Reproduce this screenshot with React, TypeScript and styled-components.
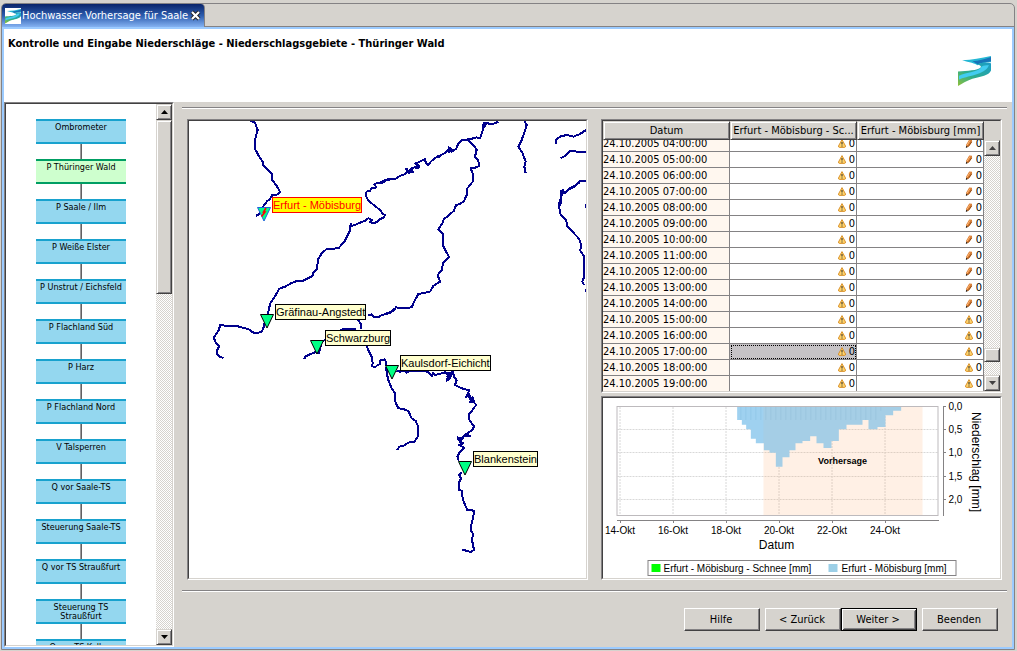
import React, { useLayoutEffect, useRef } from 'react';
import styled, { createGlobalStyle, css } from 'styled-components';

const face = '#d6d3ce';
const shade = '#848284';
const dark = '#424142';
const uiFont = '"DejaVu Sans Condensed", "DejaVu Sans", sans-serif';
const mapFont = '"Liberation Sans", Arial, sans-serif';

const GlobalStyle = createGlobalStyle`
  *, *::before, *::after { box-sizing: border-box; }
  body {
    margin: 0;
    background: ${face};
    color: #000;
    font: 11px/14px ${uiFont};
  }
  button { font: inherit; color: inherit; margin: 0; padding: 0; }
`;

const raised = css`
  background: ${face};
  border: 1px solid;
  border-color: ${face} ${dark} ${dark} ${face};
  box-shadow: inset 1px 1px #fff, inset -1px -1px ${shade};
`;

/* Window frame */
const Page = styled.div`
  height: 100vh;
  min-height: 500px;
  min-width: 760px;
  padding: 3px 2px 1px 1px;
  display: flex;
`;
const Shell = styled.section`
  flex: 1;
  min-width: 0;
  display: flex;
  flex-direction: column;
  border: 1px solid ${shade};
  border-radius: 5px 5px 0 0;
  overflow: hidden;
`;
const TabBar = styled.div`
  display: flex;
  height: 23px;
`;
const Tab = styled.div`
  display: flex;
  align-items: center;
  padding: 0 3px;
  border-right: 1px solid ${shade};
  border-top-right-radius: 4px;
  background: linear-gradient(#0a246a, #2c5cae 50%, #84b2f2);
  color: #fff;
  white-space: nowrap;
`;
const TabIcon = styled.span`
  display: flex;
  background: #fff;
`;
const TabTitle = styled.span`
  margin: 0 2px 0 1px;
`;
const TabClose = styled.button`
  display: flex;
  border: 0;
  background: none;
`;
const TabRest = styled.div`
  flex: 1;
  border-bottom: 1px solid ${shade};
`;
const Frame = styled.div`
  flex: 1;
  min-height: 0;
  display: flex;
  flex-direction: column;
  border: 2px solid #9ccbff;
`;
const Header = styled.header`
  display: flex;
  justify-content: space-between;
  height: 73px;
  padding: 8px 21px 0 4px;
  background: #fff;
`;
const Title = styled.h1`
  margin: 0;
  font-size: 11px;
  line-height: 14px;
  font-weight: bold;
`;
const HeaderLogo = styled.div`
  align-self: flex-end;
  display: flex;
  padding-bottom: 15px;
`;
const Body = styled.div`
  flex: 1;
  min-height: 0;
  display: flex;
`;

/* Sunken panel: two nested bevel lines */
const BevelOuter = styled.div`
  display: flex;
  min-width: 0;
  min-height: 0;
  border: 1px solid;
  border-color: ${shade} #fff #fff ${shade};
`;
const BevelInner = styled.div`
  flex: 1;
  display: flex;
  min-width: 0;
  min-height: 0;
  border: 1px solid;
  border-color: ${dark} ${face} ${face} ${dark};
  background: #fff;
  overflow: hidden;
`;

/* Scroll bar */
const Bar = styled.div`
  width: 16px;
  flex: none;
  display: flex;
  flex-direction: column;
`;
const ArrowButton = styled.button`
  ${raised}
  height: 16px;
  display: flex;
  align-items: center;
  justify-content: center;
`;
const Track = styled.div`
  flex: 1;
  display: flex;
  flex-direction: column;
  background: repeating-conic-gradient(#fff 0 25%, ${face} 0 50%) 0 0 / 2px 2px;
`;
const TrackPart = styled.div<{ $grow: number }>`
  flex: ${(p) => p.$grow} 0 0;
`;
const Thumb = styled(TrackPart)`
  ${raised}
`;

/* Step list */
const SidebarPanel = styled(BevelOuter)`
  width: 170px;
  flex: none;
`;
const StepList = styled.ol`
  flex: 1;
  margin: 0;
  padding: 15px 0 0;
  list-style: none;
  overflow: hidden;
`;
const StepItem = styled.li`
  display: flex;
  flex-direction: column;
  align-items: center;
  &:not(:last-child)::after {
    content: '';
    width: 2px;
    height: 15px;
    background: linear-gradient(90deg, #9c9a9c 50%, #636163 50%);
  }
`;
const StepButton = styled.button<{ $active: boolean }>`
  width: 90px;
  height: 25px;
  display: flex;
  justify-content: center;
  align-items: flex-start;
  padding-top: 2px;
  border: solid ${(p) => (p.$active ? '#009e63' : '#18a2ce')};
  border-width: 2px 0;
  background: ${(p) => (p.$active ? '#ceffce' : '#94d7ef')};
  font-size: 9px;
  line-height: 9px;
  text-align: center;
`;
const StepText = styled.span`
  white-space: pre;
`;

/* Work area */
const Main = styled.main`
  flex: 1;
  min-width: 0;
  display: flex;
  flex-direction: column;
  padding: 5px 5px 16px 8px;
`;
const Separator = styled.hr`
  width: 100%;
  height: 2px;
  margin: 0;
  border: solid;
  border-width: 1px 0;
  border-color: ${shade} transparent #fff;
`;
const Workspace = styled.div`
  flex: 1;
  min-height: 0;
  display: grid;
  grid-template-columns: 1fr 1fr;
  gap: 13px;
  padding: 10px 5px;
`;
const DataColumn = styled.div`
  min-width: 0;
  min-height: 0;
  display: grid;
  grid-template-rows: minmax(0, 1fr) 184px;
  gap: 3px;
`;
const ButtonRow = styled.footer`
  display: flex;
  justify-content: flex-end;
  gap: 5px;
  padding: 16px 9px 0 0;
`;
const ButtonPair = styled.div`
  display: flex;
`;
const PushButton = styled.button<{ $primary?: boolean }>`
  width: 76px;
  height: 23px;
  padding-right: 2px;
  background: ${face};
  border: 1px solid;
  border-color: #fff ${dark} ${dark} #fff;
  box-shadow: inset -1px -1px ${shade};
  ${(p) =>
    p.$primary &&
    css`
      border-color: #000;
      box-shadow: inset 1px 1px #fff, inset -1px -1px ${dark}, inset 2px 2px ${face}, inset -2px -2px ${shade};
    `}
`;

/* Map */
const MapCanvas = styled.div`
  position: relative;
  flex: 1;
  overflow: hidden;
`;
const Rivers = styled.svg`
  display: block;
`;
const Station = styled.div<{ $x: number; $y: number; $selected: boolean }>`
  position: absolute;
  left: ${(p) => p.$x}px;
  top: ${(p) => p.$y}px;
  display: flex;
  align-items: flex-start;
  gap: 1px;
  color: ${(p) => (p.$selected ? '#f00' : '#000')};
`;
const StationMark = styled.svg`
  margin-top: 10px;
`;
const StationLabel = styled.span<{ $selected: boolean }>`
  border: 1px solid currentColor;
  background: ${(p) => (p.$selected ? '#ff0' : '#ffffce')};
  font: 11px/14px ${mapFont};
  white-space: nowrap;
`;

/* Table */
const TableViewport = styled.div`
  flex: 1;
  min-width: 0;
  overflow: hidden;
`;
const DataTable = styled.table`
  width: 100%;
  table-layout: fixed;
  border-collapse: separate;
  border-spacing: 0;
`;
const HeadCell = styled.th`
  ${raised}
  position: sticky;
  top: 0;
  z-index: 1;
  height: 19px;
  padding: 0 1px;
  font-weight: normal;
  line-height: 15px;
  white-space: nowrap;
  overflow: hidden;
`;
const Cell = styled.td<{ $selected?: boolean }>`
  height: 16px;
  padding: 0 1px 0 0;
  border: solid ${shade};
  border-width: 0 1px 1px 0;
  line-height: 15px;
  white-space: nowrap;
  overflow: hidden;
  ${(p) =>
    p.$selected &&
    css`
      background: #c6c3c6;
      outline: 1px dotted #000;
      outline-offset: -2px;
    `}
`;
const DateCell = styled(Cell)`
  background: #fff7ef;
`;
const ValueBox = styled.span`
  display: flex;
  justify-content: flex-end;
  align-items: center;
  gap: 3px;
`;
const TableBarSlot = styled.div`
  display: flex;
  padding-top: 19px;
  background: ${face};
`;

/* Chart */
const ChartSvg = styled.svg`
  flex: 1;
  width: 100%;
  height: 100%;
  font-family: ${mapFont};
`;

const steps = [
  'Ombrometer', 'P Thüringer Wald', 'P Saale / Ilm', 'P Weiße Elster', 'P Unstrut / Eichsfeld',
  'P Flachland Süd', 'P Harz', 'P Flachland Nord', 'V Talsperren', 'Q vor Saale-TS',
  'Steuerung Saale-TS', 'Q vor TS Straußfurt', 'Steuerung TS\nStraußfurt', 'Q vor TS Kelbra',
];

const stations = [
  { name: 'Erfurt - Möbisburg', x: 68, y: 76, selected: true },
  { name: 'Gräfinau-Angstedt', x: 71, y: 183, selected: false },
  { name: 'Schwarzburg', x: 121, y: 209, selected: false },
  { name: 'Kaulsdorf-Eichicht', x: 196, y: 234, selected: false },
  { name: 'Blankenstein', x: 269, y: 330, selected: false },
];

/* River courses in thirds of a pixel, grouped by map sheet */
const sheets = [
  {
    x: -12, y: -63,
    lines: [
      '197,62 210,68 218,90 212,110 209,145 220,165 233,185 233,193 247,208 260,222 262,240 275,258 285,275 280,283 262,285 255,297 245,305 233,322 222,342 213,348',
      '630,237 607,238 598,245 588,250 578,248 568,253 574,262 560,265 555,272 545,275 542,285 548,298 560,310 575,322 585,330 592,340 600,345 597,352 585,358 575,366 565,370 556,366 562,360 550,355 540,362 525,368 510,375 500,378 497,372 495,392 490,402 478,425 460,445 425,447 410,460 398,480 397,505 385,518 382,528 355,542 340,542 330,545 318,550 300,560 283,566 275,580 265,597 257,608 252,625 248,645',
    ],
  },
  {
    x: -12, y: 537,
    lines: [
      '238,70 235,85 230,95 212,100 200,95 190,87 175,84 155,78 140,79 105,75 102,90 95,100 86,112 92,128 103,138 97,150 97,162 105,170 115,174',
      '358,178 360,170 375,163 390,157 402,160 410,125 420,120',
      '465,90 480,87 513,88',
      '548,45 560,43 565,50 582,50 590,45 600,43 615,38 630,25',
      '515,55 528,72 528,88',
      '545,137 552,155 560,170 563,190 560,198 570,202 578,195 585,192 585,182 598,178 603,185 602,197',
    ],
  },
  {
    x: 573, y: -63,
    lines: [
      '0,248 15,240 45,237 60,228 75,222 82,215 78,207 88,215 98,215 95,205 108,200 118,200 108,190 125,182 135,177 137,187 145,195 155,182 172,170 190,162 205,150 210,143 215,155 228,147 235,130 245,121 265,118 280,115 290,112 300,115 305,100 310,85 308,75 318,68 330,72 345,70 355,65',
      '80,206 86,219 92,208 99,219',
      '104,188 112,194 106,203 118,205',
      '170,166 178,172 184,163',
      '204,141 216,149 206,155 220,153',
      '262,118 270,127 282,137 290,150 285,170 295,180 297,198 285,203 272,205 278,220 278,245 262,265 260,285 252,303 240,312 228,315 222,332 205,347 192,357 187,370 175,388 188,402 188,435 198,455 207,470 190,488 185,510 173,525 180,545 160,558 150,575 115,582 105,600 95,622 60,625 48,622 40,633 20,640 0,648',
      '433,62 440,75 435,92 425,120 415,140 428,160 432,172 437,185 433,200 437,220',
      '527,132 528,120 540,110 560,105 580,110 600,102 618,90',
      '542,175 555,168 570,153 595,155 618,155',
      '618,242 600,243 580,262 565,270 555,278 548,270 542,275 542,295 536,315 542,345 558,360 562,378 580,398 598,417 603,435 601,452 611,468 612,500 613,530 607,545 612,555',
      '600,246 582,259 568,266 560,275 550,276 545,285 541,318',
      '310,66 318,73 312,84',
      '617,313 617,323',
      '617,567 617,575',
    ],
  },
  {
    x: 573, y: 657,
    lines: [
      '18,80 20,95 24,118 35,145 46,160 46,185 55,205 70,207 85,213 95,235 107,243 115,260 115,288 103,305 85,308 70,318 58,320 52,330',
      '50,92 60,95 75,93 80,98 90,93 130,92 145,96 150,103 156,108 160,98 165,105 185,100 195,97 205,105 200,122 210,115 218,92 222,110 230,120 225,135 238,142 255,148 268,150 258,172 268,162 272,182 278,172 283,188 289,195 280,205 275,215 266,222 267,238 275,250 283,258 277,270 265,278 255,287 270,288 257,282 245,295 233,292 236,300 248,296 240,306 250,310 238,315 252,323 240,335 232,350 236,362',
      '198,98 212,98 208,112 200,108',
      '264,170 276,176 270,186 280,184',
      '245,395 238,405 243,415 236,430 237,450 245,452 248,475 255,495 262,510 282,512 280,530 275,550 272,570 278,580 277,605 280,620 282,630 272,636 262,633 245,628',
    ],
  },
];

const hours = Array.from({ length: 16 }, (_, i) => i + 4);

/* Precipitation steps: [left edge, depth] in thirds of a pixel */
const rain: [number, number][] = [
  [401, 42], [415, 56], [428, 70], [442, 98], [457, 112], [481, 133], [498, 140], [517, 182],
  [537, 154], [558, 133], [576, 112], [597, 105], [620, 91], [639, 112], [660, 126], [684, 105],
  [706, 70], [729, 56], [777, 42], [795, 70], [822, 63], [846, 28], [869, 14], [893, 0],
];
const rainPath = `M401,24 ${rain.map(([x, d]) => `H${x} V${24 + d}`).join(' ')} V24 Z`;

const dayTicks = [14, 16, 18, 20, 22, 24].map((day, i) => ({ day, x: 16.5 + i * 53 }));
const valueTicks = [
  { label: '0,0', y: 8.5 }, { label: '0,5', y: 31.5 }, { label: '1,0', y: 54.5 },
  { label: '1,5', y: 78.5 }, { label: '2,0', y: 101.5 },
];

function RiverIcon({ size }: { size: number }) {
  return (
    <svg width={size} height={size} viewBox="0 0 32 32" aria-hidden="true">
      <defs>
        <linearGradient id={`bank${size}`} x1="0" x2="1" y1="1" y2="0">
          <stop offset="0" stopColor="#8fbf3a" />
          <stop offset="0.4" stopColor="#2fae8a" />
          <stop offset="1" stopColor="#1a9cc8" />
        </linearGradient>
      </defs>
      <path d="M4 6 C14 6 22 4 32 2 V8 C26 8 22 9 19 11 C17 9 11 8 4 6Z" fill="#25b7d4" />
      <path d="M14 7 C20 7 26 5 32 3 V7 C26 8 21 9 19 10Z" fill="#1873b8" />
      <path d="M19 10 C23 8 28 8 32 9 V16 C30 21 22 22 14 24 C8 26 4 29 0 31 V17 C9 16 19 16 22 13 C23 12 21 11 19 10Z" fill={`url(#bank${size})`} />
      <path d="M23 12 C20 18 8 17 1 21 V25 C8 21 26 21 30 11 C27 11 25 11 23 12Z" fill="#42ccf0" />
    </svg>
  );
}

function WarningIcon() {
  return (
    <svg width="8" height="9" viewBox="0 0 8 9" role="img" aria-label="Warnung">
      <path d="M4 .6 L7.5 7 Q7.6 8.3 6.6 8.4 H1.4 Q.4 8.3 .5 7 Z" fill="#ffd36b" stroke="#d68a21" strokeWidth=".9" />
      <path d="M3.5 3 H4.5 V5.6 H3.5Z M3.5 6.4 H4.5 V7.4 H3.5Z" fill="#212021" />
    </svg>
  );
}

function PencilIcon() {
  return (
    <svg width="8" height="9" viewBox="0 0 8 9" role="img" aria-label="Bearbeitet">
      <path d="M1 8.5 L1.3 5.4 L4.2 .6 L7 .8 L6.8 3.4 L3.6 7.8 Z" fill="#d67b31" />
      <path d="M2.2 6 L5 1.4" stroke="#ffb573" strokeWidth="1" />
      <path d="M3.5 7.4 L6.7 2.8" stroke="#844110" strokeWidth=".8" />
      <path d="M.8 9 L1.2 6.8 L2.8 8Z" fill="#212021" />
    </svg>
  );
}

function ScrollBar({ before, thumb, after, arrow }: { before: number; thumb: number; after: number; arrow: string }) {
  return (
    <Bar>
      <ArrowButton aria-label="Nach oben">
        <svg width="7" height="4" viewBox="0 0 7 4"><path d="M0 4 L3.5 0 L7 4Z" fill={arrow} /></svg>
      </ArrowButton>
      <Track>
        <TrackPart $grow={before} />
        <Thumb $grow={thumb} />
        <TrackPart $grow={after} />
      </Track>
      <ArrowButton aria-label="Nach unten">
        <svg width="7" height="4" viewBox="0 0 7 4"><path d="M0 0 L3.5 4 L7 0Z" fill={arrow} /></svg>
      </ArrowButton>
    </Bar>
  );
}

function StepSidebar() {
  return (
    <SidebarPanel as="nav">
      <BevelInner>
        <StepList>
          {steps.map((step, i) => (
            <StepItem key={step}>
              <StepButton $active={i === 1}><StepText>{step}</StepText></StepButton>
            </StepItem>
          ))}
        </StepList>
        <ScrollBar before={0} thumb={173} after={336} arrow="#000" />
      </BevelInner>
    </SidebarPanel>
  );
}

function RiverMap() {
  return (
    <BevelOuter>
      <BevelInner>
        <MapCanvas>
          <Rivers width="397" height="457" viewBox="0 0 1191 1371" shapeRendering="crispEdges">
            {sheets.map((sheet, i) => (
              <g key={i} transform={`translate(${sheet.x} ${sheet.y})`} fill="none" stroke="#00008c" strokeWidth="6" strokeLinejoin="round">
                {sheet.lines.map((points) => <polyline key={points} points={points} />)}
              </g>
            ))}
          </Rivers>
          {stations.map((s) => (
            <Station key={s.name} $x={s.x} $y={s.y} $selected={s.selected}>
              <StationMark width="14" height="15" viewBox="0 0 14 15">
                <path d="M.5 .5 H13.5 L7 14Z" fill="#00ff84" stroke={s.selected ? '#2161de' : '#000'} />
                {s.selected && <path d="M9 1 L6.5 5 H8 L4.5 9.5" fill="none" stroke="#f00" strokeWidth="1.6" />}
              </StationMark>
              <StationLabel $selected={s.selected}>{s.name}</StationLabel>
            </Station>
          ))}
        </MapCanvas>
      </BevelInner>
    </BevelOuter>
  );
}

function ValueTable() {
  const viewport = useRef<HTMLDivElement>(null);
  useLayoutEffect(() => {
    if (viewport.current) viewport.current.scrollTop = 4;
  }, []);
  return (
    <BevelOuter>
      <BevelInner>
        <TableViewport ref={viewport}>
          <DataTable>
            <thead>
              <tr>
                <HeadCell>Datum</HeadCell>
                <HeadCell title="Erfurt - Möbisburg - Schnee [mm]">Erfurt - Möbisburg - Sc...</HeadCell>
                <HeadCell>Erfurt - Möbisburg [mm]</HeadCell>
              </tr>
            </thead>
            <tbody>
              {hours.map((h) => (
                <tr key={h}>
                  <DateCell>24.10.2005 {String(h).padStart(2, '0')}:00:00</DateCell>
                  <Cell $selected={h === 17}><ValueBox><WarningIcon />0</ValueBox></Cell>
                  <Cell><ValueBox>{h < 15 ? <PencilIcon /> : <WarningIcon />}0</ValueBox></Cell>
                </tr>
              ))}
            </tbody>
          </DataTable>
        </TableViewport>
        <TableBarSlot><ScrollBar before={194} thumb={12} after={13} arrow="#424142" /></TableBarSlot>
      </BevelInner>
    </BevelOuter>
  );
}

function RainChart() {
  return (
    <BevelOuter>
      <BevelInner>
        <ChartSvg viewBox="0 0 396 180" role="img" aria-label="Niederschlag">
          <g stroke="#d8d8d8" strokeDasharray="2 1">
            {dayTicks.map((t) => <line key={t.day} x1={t.x} x2={t.x} y1="9" y2="117" />)}
            {valueTicks.slice(1).map((t) => <line key={t.label} x1="14" x2="334" y1={t.y} y2={t.y} />)}
          </g>
          <rect x="160" y="9" width="159" height="109" fill="#ffa862" fillOpacity=".1" />
          <g transform="scale(0.333333)">
            <path d={rainPath} fill="#9fd1f0" />
            {Array.from({ length: 29 }, (_, i) => (
              <line key={i} x1={412 + i * 15} x2={412 + i * 15} y1="24" y2={24 + (i < 28 ? 42 : 14)} stroke="#93c8e8" strokeWidth="3" />
            ))}
          </g>
          <rect x="160" y="9" width="159" height="109" fill="#ffa862" fillOpacity=".07" />
          <rect x="13.5" y="8.5" width="321" height="109" fill="none" stroke="#bdbabd" />
          <g stroke="#848284" shapeRendering="crispEdges">
            <path d="M13 122.5 H335 M339.5 8 V118" fill="none" />
            {dayTicks.map((t) => <line key={t.day} x1={t.x} x2={t.x} y1="122" y2="125" />)}
            {valueTicks.map((t) => <line key={t.label} x1="339" x2="342" y1={t.y} y2={t.y} />)}
          </g>
          <g fontSize="10">
            {dayTicks.map((t) => <text key={t.day} x={t.x} y="136" textAnchor="middle">{t.day}-Okt</text>)}
            {valueTicks.map((t) => <text key={t.label} x="345" y={t.y + 3}>{t.label}</text>)}
          </g>
          <text x="239" y="66" textAnchor="middle" fontSize="9" fontWeight="bold">Vorhersage</text>
          <text x="173" y="151" textAnchor="middle" fontSize="12">Datum</text>
          <text transform="translate(368 64) rotate(90)" textAnchor="middle" fontSize="12">Niederschlag [mm]</text>
          <rect x="44.5" y="162.5" width="308" height="15" fill="none" stroke="#848284" />
          <rect x="48" y="166" width="9" height="8" fill="#0f0" />
          <rect x="225" y="166" width="9" height="8" fill="#9ccfe7" />
          <g fontSize="10">
            <text x="60" y="174">Erfurt - Möbisburg - Schnee [mm]</text>
            <text x="238" y="174">Erfurt - Möbisburg [mm]</text>
          </g>
        </ChartSvg>
      </BevelInner>
    </BevelOuter>
  );
}

export default function App() {
  return (
    <Page>
      <GlobalStyle />
      <Shell>
        <TabBar>
          <Tab>
            <TabIcon><RiverIcon size={16} /></TabIcon>
            <TabTitle>Hochwasser Vorhersage für Saale</TabTitle>
            <TabClose aria-label="Schließen">
              <svg width="11" height="11" viewBox="0 0 11 11">
                <path d="M2 2 L9 9 M9 2 L2 9" stroke="#212021" strokeWidth="4" />
                <path d="M2 2 L9 9 M9 2 L2 9" stroke="#fff" strokeWidth="2.2" />
              </svg>
            </TabClose>
          </Tab>
          <TabRest />
        </TabBar>
        <Frame>
          <Header>
            <Title>Kontrolle und Eingabe Niederschläge - Niederschlagsgebiete - Thüringer Wald</Title>
            <HeaderLogo><RiverIcon size={33} /></HeaderLogo>
          </Header>
          <Body>
            <StepSidebar />
            <Main>
              <Separator />
              <Workspace>
                <RiverMap />
                <DataColumn>
                  <ValueTable />
                  <RainChart />
                </DataColumn>
              </Workspace>
              <Separator />
              <ButtonRow>
                <PushButton>Hilfe</PushButton>
                <ButtonPair>
                  <PushButton>&lt; Zurück</PushButton>
                  <PushButton $primary>Weiter &gt;</PushButton>
                </ButtonPair>
                <PushButton>Beenden</PushButton>
              </ButtonRow>
            </Main>
          </Body>
        </Frame>
      </Shell>
    </Page>
  );
}
